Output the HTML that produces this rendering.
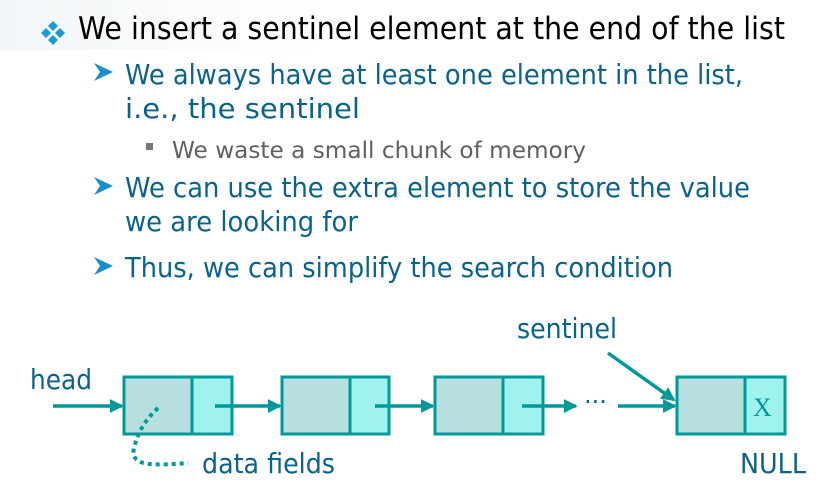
<!DOCTYPE html>
<html><head><meta charset="utf-8"><style>
html,body{margin:0;padding:0;background:#fff;}
svg{display:block}
text{font-family:"DejaVu Sans","Liberation Sans",sans-serif}
</style></head><body>
<svg width="819" height="485" viewBox="0 0 819 485" xmlns="http://www.w3.org/2000/svg">
<defs>
<linearGradient id="bg" x1="0" y1="0" x2="1" y2="0"><stop offset="0" stop-color="#f2f6f8"/><stop offset="0.4" stop-color="#ffffff"/></linearGradient>
<marker id="ah" markerWidth="4" markerHeight="4" refX="3.5" refY="2" orient="auto" markerUnits="strokeWidth"><path d="M0,0 L4,2 L0,4 z" fill="#009999"/></marker>
</defs>
<rect x="0" y="0" width="819" height="50" fill="url(#bg)"/>
<g fill="#1a9ad0">
<path d="M53,21 l5,5 l-5,5 l-5,-5z"/><path d="M46,28 l5,5 l-5,5 l-5,-5z"/><path d="M60,28 l5,5 l-5,5 l-5,-5z"/><path d="M53,35 l5,5 l-5,5 l-5,-5z"/>
</g>
<text x="78" y="39" font-size="31" fill="#000" textLength="707" lengthAdjust="spacingAndGlyphs">We insert a sentinel element at the end of the list</text>
<g fill="#1a8fc8">
<path d="M94,63 L113,72 L94,81 L100,72z"/>
<path d="M94,177 L113,186 L94,195 L100,186z"/>
<path d="M94,257 L113,266 L94,275 L100,266z"/>
</g>
<g fill="#0b6389" font-size="28">
<text x="125" y="84" textLength="618" lengthAdjust="spacingAndGlyphs">We always have at least one element in the list,</text>
<text x="125" y="118" textLength="235" lengthAdjust="spacingAndGlyphs">i.e., the sentinel</text>
<text x="125" y="197" textLength="625" lengthAdjust="spacingAndGlyphs">We can use the extra element to store the value</text>
<text x="125" y="231" textLength="233" lengthAdjust="spacingAndGlyphs">we are looking for</text>
<text x="125" y="277" textLength="548" lengthAdjust="spacingAndGlyphs">Thus, we can simplify the search condition</text>
</g>
<rect x="146" y="143" width="7" height="7" fill="#777"/>
<text x="172" y="158" font-size="23" fill="#606060" textLength="414" lengthAdjust="spacingAndGlyphs">We waste a small chunk of memory</text>
<g stroke="#009999" stroke-width="3">
<rect x="124" y="377" width="68" height="57" fill="#b8dfe0"/><rect x="192" y="377" width="40" height="57" fill="#a0f2ef"/>
<rect x="282" y="377" width="68" height="57" fill="#b8dfe0"/><rect x="350" y="377" width="39" height="57" fill="#a0f2ef"/>
<rect x="435" y="377" width="68" height="57" fill="#b8dfe0"/><rect x="503" y="377" width="40" height="57" fill="#a0f2ef"/>
<rect x="677" y="377" width="68" height="57" fill="#b8dfe0"/><rect x="745" y="377" width="40" height="57" fill="#a0f2ef"/>
</g>
<g stroke="#009999" stroke-width="3.5" fill="none" marker-end="url(#ah)">
<line x1="53" y1="406" x2="122" y2="406"/>
<line x1="215" y1="406" x2="280" y2="406"/>
<line x1="375" y1="406" x2="433" y2="406"/>
<line x1="522" y1="406" x2="576" y2="406"/>
<line x1="618" y1="406" x2="675" y2="406"/>
<line x1="608" y1="353" x2="674" y2="400"/>
</g>
<text x="584" y="410" font-size="24" fill="#0b6389">···</text>
<path d="M158,408 C145,420 138,432 134,448 C130,466 150,466 188,463" stroke="#009999" stroke-width="4" fill="none" stroke-dasharray="4,4"/>
<text x="753" y="416" font-size="26" fill="#009999" style="font-family:'Liberation Serif',serif">X</text>
<g fill="#0b6389" font-size="28">
<text x="30" y="389" textLength="62" lengthAdjust="spacingAndGlyphs">head</text>
<text x="517" y="338" textLength="100" lengthAdjust="spacingAndGlyphs">sentinel</text>
<text x="202" y="473" textLength="133" lengthAdjust="spacingAndGlyphs">data fields</text>
<text x="740" y="473" textLength="66" lengthAdjust="spacingAndGlyphs">NULL</text>
</g>
</svg>
</body></html>
